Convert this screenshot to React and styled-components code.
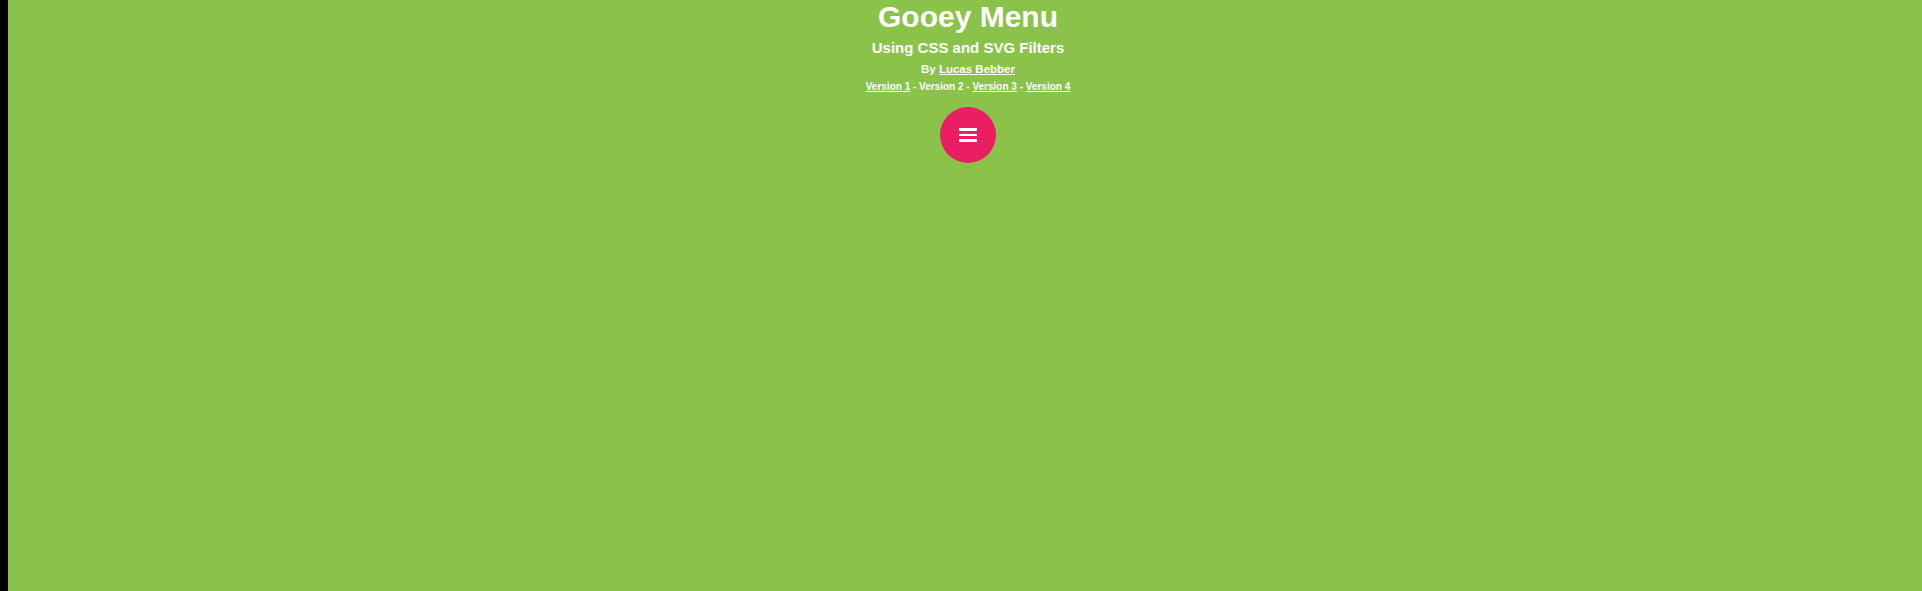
import React from "react";
import styled, { createGlobalStyle } from "styled-components";

const Global = createGlobalStyle`
  html, body { margin: 0; padding: 0; background: #000; height: 100%; overflow: hidden; }
  body { padding-left: 8px; box-sizing: border-box; }
  #root { height: 100%; }
`;

const Page = styled.div`
  height: 100%;
  background: #8bc34a;
  display: flex;
  flex-direction: column;
  align-items: center;
  padding-left: 6px;
  box-sizing: border-box;
  font-family: "Liberation Sans", Arial, sans-serif;
  font-weight: bold;
  color: #fff;
`;

const Title = styled.h1`
  margin: 0;
  font-size: 30px;
  line-height: normal;
`;

const Subtitle = styled.h2`
  margin: 4.6px 0 0;
  font-size: 15px;
  line-height: normal;
`;

const Byline = styled.p`
  margin: 7.3px 0 0;
  font-size: 11.5px;
  line-height: normal;
`;

const Versions = styled.p`
  margin: 6px 0 0;
  font-size: 10px;
  line-height: normal;
`;

const Link = styled.a`
  color: #fff;
  text-decoration: underline;
`;

const MenuButton = styled.button`
  margin-top: 15px;
  width: 56px;
  height: 56px;
  border-radius: 50%;
  border: none;
  padding: 0;
  background: #e91e63;
  display: flex;
  flex-direction: column;
  align-items: center;
  justify-content: center;
  gap: 3px;
  cursor: pointer;
`;

const Line = styled.span`
  display: block;
  width: 18px;
  height: 2.5px;
  background: #fff;
`;

export default function App() {
  return (
    <>
      <Global />
      <Page>
        <Title>Gooey Menu</Title>
        <Subtitle>Using CSS and SVG Filters</Subtitle>
        <Byline>
          By <Link href="#">Lucas Bebber</Link>
        </Byline>
        <Versions>
          <Link href="#">Version 1</Link> - Version 2 - <Link href="#">Version 3</Link> -{" "}
          <Link href="#">Version 4</Link>
        </Versions>
        <MenuButton aria-label="menu">
          <Line />
          <Line />
          <Line />
        </MenuButton>
      </Page>
    </>
  );
}
